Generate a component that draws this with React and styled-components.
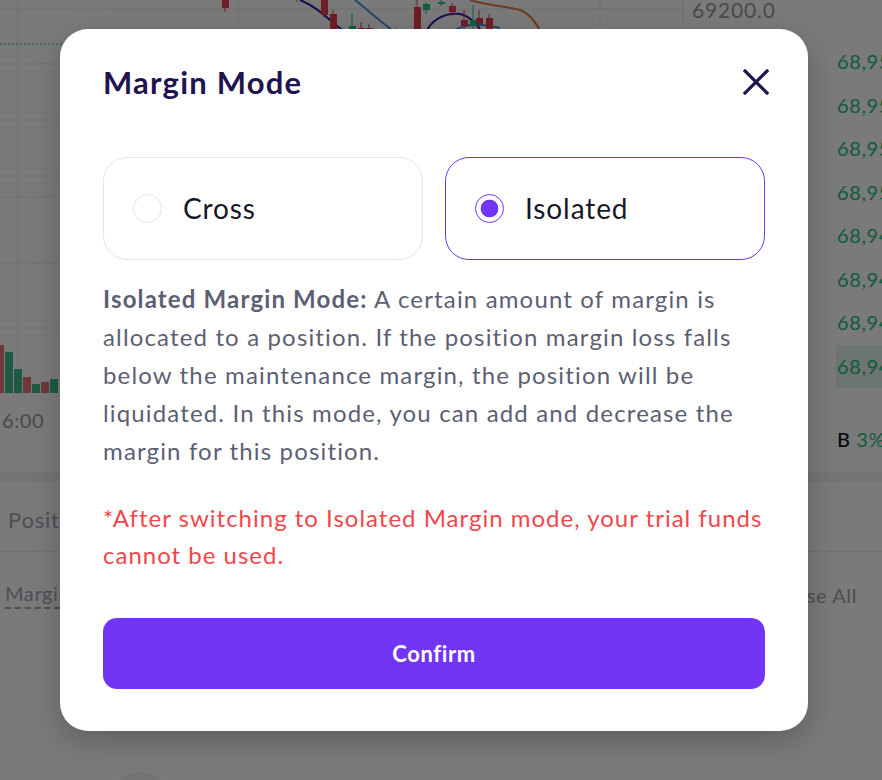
import { useState } from 'react';
import styled, { createGlobalStyle } from 'styled-components';

const GlobalStyle = createGlobalStyle`
  * { box-sizing: border-box; }
  html, body { margin: 0; padding: 0; }
  body {
    font-family: Lato, "Noto Sans", "Liberation Sans", sans-serif;
    background: #ffffff;
    overflow: hidden;
  }
`;

const bookPrices = ['68,955.5', '68,954.0', '68,952.5', '68,950.0', '68,948.5', '68,947.0', '68,945.5', '68,944.0'];

// candles along the top of the chart: [x, open, close, high, low]
const candles = [
  [222, -10, 8, 12, -20],
  [294, -14, -4, 2, -20],
  [321, -6, 15, 18, -10],
  [330, 14, 34, 40, 10],
  [349, 26, 40, 44, 13],
  [358, 28, 40, 44, 22],
  [366, 28, 40, 40, 24],
  [393, 38, 40, 40, 28],
  [414, 7, 30, 34, 0],
  [423, 4, 10, 14, 2],
  [438, 2, 4, 6, 0],
  [449, 6, 12, 16, 3],
  [461, 20, 26, 32, 10],
  [470, 20, 26, 30, 5],
  [476, 18, 24, 28, 10],
  [486, 18, 40, 40, 14],
];

const volumes = [
  [-4, 345, 'r'], [5, 352, 'g'], [14, 369, 'g'], [23, 377, 'r'], [32, 384, 'g'], [41, 382, 'r'], [50, 379, 'g'],
];

function Chart() {
  return (
    <svg width="800" height="472" viewBox="0 0 800 472">
      <rect width="800" height="472" fill="#ffffff" />
      {[18, 238, 415, 600].map((x) => (
        <line key={x} x1={x} y1="0" x2={x} y2="400" stroke="#eaebef" strokeWidth="1" />
      ))}
      {[9, 64, 120, 176, 197, 263, 328].map((y) => (
        <line key={y} x1="0" y1={y} x2="683" y2={y} stroke="#eaebef" strokeWidth="1" />
      ))}
      <line x1="683" y1="0" x2="683" y2="472" stroke="#e4e5ea" />
      <line x1="0" y1="44" x2="683" y2="44" stroke="#22b07a" strokeDasharray="2 2" />
      <path d="M300 0 C320 8 330 22 345 32" stroke="#3a18a6" strokeWidth="2" fill="none" />
      <path d="M355 0 C368 10 378 20 395 32" stroke="#4a90e2" strokeWidth="2" fill="none" />
      <path d="M425 35 C430 20 445 12 460 14 C470 16 476 24 482 32" stroke="#3a18a6" strokeWidth="2" fill="none" />
      <path d="M452 32 C462 24 476 22 500 28" stroke="#4a90e2" strokeWidth="2" fill="none" />
      <path d="M470 0 C490 6 505 6 520 10 C530 14 535 22 540 30" stroke="#e67a3c" strokeWidth="2" fill="none" />
      {candles.map(([x, o, c, h, l], i) => {
        const up = i % 3 === 1 || i === 7 || i === 9 || i === 13;
        const color = up ? '#21c385' : '#e6404b';
        return (
          <g key={i}>
            <line x1={x + 3} y1={l} x2={x + 3} y2={h} stroke={color} strokeWidth="1" />
            <rect x={x} y={Math.min(o, c)} width="7" height={Math.abs(c - o) || 1} fill={color} />
          </g>
        );
      })}
      {volumes.map(([x, y, t]) => (
        <rect key={x} x={x} y={y} width="8" height={393 - y} fill={t === 'r' ? '#e6747a' : '#3fbd8a'} />
      ))}
      <text x="2" y="428" fontSize="20" fill="#9698a6" fontFamily="Lato, sans-serif" letterSpacing="0.6">6:00</text>
      <text x="692" y="18" fontSize="21" fill="#9698a6" fontFamily="Lato, sans-serif" letterSpacing="0.8">69200.0</text>
    </svg>
  );
}

function ModeCard({ label, active, onSelect }) {
  return (
    <Card $active={active} onClick={onSelect}>
      <Radio $active={active} />
      <CardLabel>{label}</CardLabel>
    </Card>
  );
}

export default function App() {
  const [mode, setMode] = useState('isolated');

  return (
    <>
      <GlobalStyle />
      <Page>
        <TopArea>
          <ChartPane>
            <Chart />
          </ChartPane>
          <BookPane>
            {bookPrices.map((p, i) => (
              <BookRow key={p} $mark={i === bookPrices.length - 1}>{p}</BookRow>
            ))}
            <Ratio>
              <b>B</b> <span>3%</span>
            </Ratio>
          </BookPane>
        </TopArea>
        <Positions>
          <TabBar>
            <Tab>Positions</Tab>
          </TabBar>
          <PosToolbar>
            <Dashed>Margin</Dashed>
            <CloseAll>Close All</CloseAll>
          </PosToolbar>
          <FloatDot />
        </Positions>

        <Overlay>
          <Modal>
            <Header>
              <Title>Margin Mode</Title>
              <CloseButton aria-label="close">
                <svg width="26" height="26" viewBox="0 0 26 26">
                  <path d="M2 2 L24 24 M24 2 L2 24" stroke="#21134f" strokeWidth="3.2" strokeLinecap="square" />
                </svg>
              </CloseButton>
            </Header>

            <Options>
              <ModeCard label="Cross" active={mode === 'cross'} onSelect={() => setMode('cross')} />
              <ModeCard label="Isolated" active={mode === 'isolated'} onSelect={() => setMode('isolated')} />
            </Options>

            <Description>
              <strong>Isolated Margin Mode:</strong> A certain amount of margin is allocated to a position. If the
              position margin loss falls below the maintenance margin, the position will be liquidated. In this
              mode, you can add and decrease the margin for this position.
            </Description>

            <Warning>*After switching to Isolated Margin mode, your trial funds cannot be used.</Warning>

            <ConfirmButton>Confirm</ConfirmButton>
          </Modal>
        </Overlay>
      </Page>
    </>
  );
}

const Page = styled.div`
  position: relative;
  width: 882px;
  height: 780px;
  overflow: hidden;
  display: flex;
  flex-direction: column;
  background: #ffffff;
`;

const TopArea = styled.div`
  display: flex;
  height: 482px;
  flex-shrink: 0;
  border-bottom: 10px solid #f2f3f5;
`;

const ChartPane = styled.div`
  width: 800px;
  flex-shrink: 0;
  border-right: 1px solid #e4e5ea;
  svg { display: block; }
`;

const BookPane = styled.div`
  flex: 1;
  display: flex;
  flex-direction: column;
  padding-top: 40px;
`;

const BookRow = styled.div`
  height: 43.5px;
  line-height: 43.5px;
  padding-left: 37px;
  font-size: 20px;
  letter-spacing: 0.6px;
  color: #22c07f;
  white-space: nowrap;
  background: ${(p) => (p.$mark ? 'linear-gradient(to right, transparent 36px, #e3f5ec 36px)' : 'transparent')};
`;

const Ratio = styled.div`
  margin-top: 39px;
  padding-left: 37px;
  font-size: 20px;
  letter-spacing: 0.6px;
  white-space: nowrap;
  b { color: #0f0d2a; font-weight: 500; }
  span { color: #22c07f; }
`;

const Positions = styled.div`
  position: relative;
  flex: 1;
  display: flex;
  flex-direction: column;
`;

const TabBar = styled.div`
  height: 70px;
  flex-shrink: 0;
  display: flex;
  align-items: center;
  padding: 6px 8px 0;
  border-bottom: 1px solid #eceef2;
`;

const Tab = styled.span`
  font-size: 22px;
  letter-spacing: 0.8px;
  color: #a3a5b5;
`;

const PosToolbar = styled.div`
  display: flex;
  justify-content: space-between;
  align-items: center;
  padding: 29px 25px 0 5px;
  font-size: 20px;
  letter-spacing: 0.6px;
  color: #a3a5b5;
`;

const Dashed = styled.span`
  border-bottom: 2px dashed #a3a5b5;
  padding-bottom: 2px;
`;

const CloseAll = styled.span``;

const FloatDot = styled.div`
  position: absolute;
  left: 108px;
  top: 290px;
  width: 64px;
  height: 64px;
  border-radius: 50%;
  background: #f1f2f5;
`;

const Overlay = styled.div`
  position: absolute;
  inset: 0;
  background: rgba(0, 0, 0, 0.52);
  display: flex;
  align-items: flex-start;
  padding: 29px 0 0 60px;
`;

const Modal = styled.div`
  width: 748px;
  height: 702px;
  background: #ffffff;
  border-radius: 28px;
  box-shadow: 0 10px 30px rgba(0, 0, 0, 0.22);
  padding: 33px 43px 42px;
  display: flex;
  flex-direction: column;
`;

const Header = styled.div`
  display: flex;
  justify-content: space-between;
  align-items: center;
  height: 40px;
`;

const Title = styled.h2`
  margin: 0;
  font-size: 31px;
  font-weight: 700;
  color: #21134f;
  letter-spacing: 1.2px;
`;

const CloseButton = styled.button`
  border: 0;
  background: none;
  padding: 0;
  margin-right: -4px;
  display: flex;
  cursor: pointer;
`;

const Options = styled.div`
  display: grid;
  grid-template-columns: 1fr 1fr;
  gap: 22px;
  margin-top: 55px;
`;

const Card = styled.div`
  height: 103px;
  border-radius: 24px;
  border: 1px solid ${(p) => (p.$active ? '#7335f5' : '#e4e5ea')};
  display: flex;
  align-items: center;
  gap: 21px;
  padding-left: 29px;
  cursor: pointer;
`;

const Radio = styled.span`
  width: 29px;
  height: 29px;
  border-radius: 50%;
  flex-shrink: 0;
  border: 1px solid ${(p) => (p.$active ? '#7335f5' : '#e4e5ea')};
  background: ${(p) => (p.$active ? 'radial-gradient(circle, #7335f5 0 8.5px, #ffffff 9.2px)' : '#ffffff')};
`;

const CardLabel = styled.span`
  font-size: 28px;
  letter-spacing: 0.9px;
  color: #161827;
  line-height: 1;
  padding-bottom: 2px;
`;

const Description = styled.p`
  margin: 20px 0 0;
  font-size: 24px;
  line-height: 38px;
  letter-spacing: 1.15px;
  color: #5c5f74;
  strong { font-weight: 700; }
`;

const Warning = styled.p`
  margin: 29px 0 0;
  font-size: 24px;
  line-height: 37px;
  letter-spacing: 1px;
  color: #f0474b;
`;

const ConfirmButton = styled.button`
  margin-top: auto;
  height: 71px;
  border: 0;
  border-radius: 14px;
  background: #7335f5;
  color: #ffffff;
  font-family: inherit;
  font-size: 22px;
  letter-spacing: 0.6px;
  font-weight: 700;
  cursor: pointer;
`;
